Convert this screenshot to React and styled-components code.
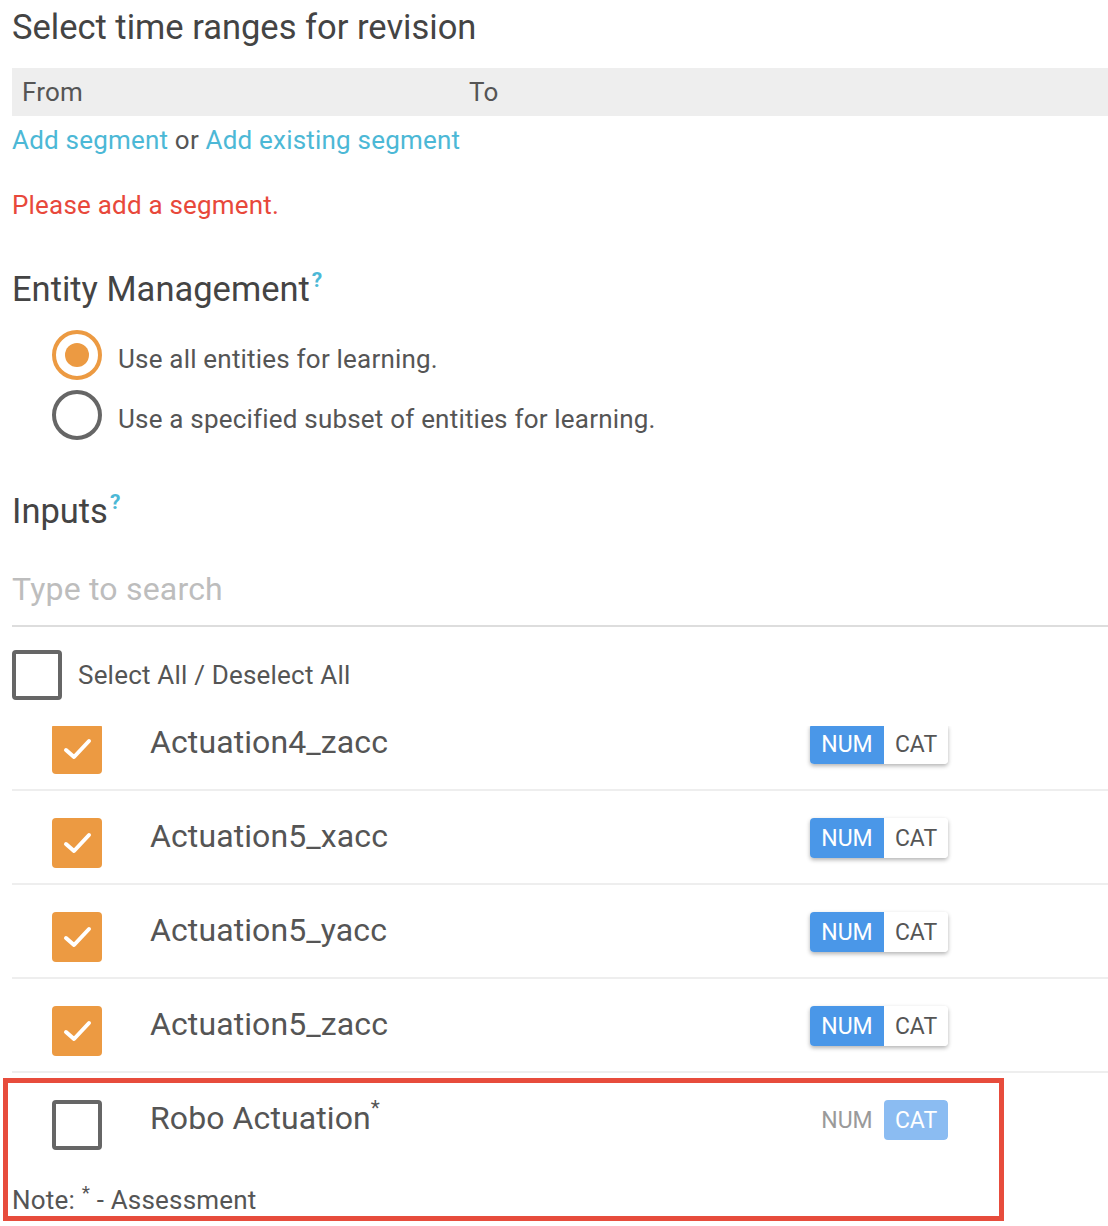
import React, { useState } from "react";
import styled, { createGlobalStyle } from "styled-components";

const Global = createGlobalStyle`
  html, body { margin: 0; padding: 0; background: #fff; }
  body { font-family: Roboto, "Noto Sans", Arial, sans-serif; color: #555; }
  *, *::before, *::after { box-sizing: border-box; }
`;

const Page = styled.div`
  padding: 8px 0 12px 12px;
  width: 1108px;
  min-height: 1226px;
`;

const Heading = styled.h2`
  margin: ${(p) => p.$mt || 0}px 0 0;
  font-size: 34.5px;
  line-height: 38px;
  font-weight: 400;
  color: #444;
`;

const Help = styled.sup`
  font-size: 21px;
  line-height: 0;
  color: #4cb8d6;
  font-weight: 700;
  margin-left: 2px;
  vertical-align: 14px;
`;

const RangeHeader = styled.div`
  margin-top: 22px;
  height: 48px;
  background: #eee;
  display: grid;
  grid-template-columns: 447px 1fr;
  align-items: center;
  padding-left: 10px;
  font-size: 26px;
  letter-spacing: 0.2px;
  color: #555;
`;

const Line = styled.div`
  margin-top: ${(p) => p.$mt || 0}px;
  font-size: 26px;
  letter-spacing: 0.2px;
  line-height: 28px;
  color: ${(p) => p.$color || "#555"};
`;

const Link = styled.a`
  color: #4cb8d6;
  text-decoration: none;
  cursor: pointer;
`;

const RadioGroup = styled.div`
  margin-top: 22px;
  padding-left: 40px;
  display: flex;
  flex-direction: column;
  gap: 10px;
`;

const RadioItem = styled.label`
  display: flex;
  align-items: center;
  gap: 16px;
  height: 50px;
  cursor: pointer;
`;

const RadioCircle = styled.span`
  width: 50px;
  height: 50px;
  border-radius: 50%;
  border: 4px solid ${(p) => (p.$on ? "#ec9a42" : "#666")};
  display: flex;
  align-items: center;
  justify-content: center;
  flex: none;
  &::after {
    content: "";
    width: 24px;
    height: 24px;
    border-radius: 50%;
    background: #ec9a42;
    display: ${(p) => (p.$on ? "block" : "none")};
  }
`;

const RadioText = styled.span`
  font-size: 26px;
  letter-spacing: 0.2px;
  line-height: 28px;
  padding-top: 8px;
  color: #555;
`;

const Search = styled.input`
  display: block;
  margin-top: 39px;
  width: 1096px;
  height: 40px;
  box-sizing: content-box;
  padding: 0 0 16px 0;
  border: none;
  border-bottom: 2px solid #ddd;
  outline: none;
  font-family: Roboto, "Noto Sans", Arial, sans-serif;
  font-size: 32px;
  letter-spacing: 0.2px;
  color: #555;
  background: transparent;
  &::placeholder { color: #bdbdbd; }
`;

const SelectAllRow = styled.label`
  margin-top: 23px;
  display: flex;
  align-items: center;
  gap: 16px;
  height: 50px;
  font-size: 26px;
  letter-spacing: 0.2px;
  color: #555;
`;

const Box = styled.span`
  width: 50px;
  height: 50px;
  flex: none;
  border-radius: 4px;
  background: ${(p) => (p.$on ? "#ec9a42" : "#fff")};
  border: ${(p) => (p.$on ? "none" : "4px solid #666")};
  display: flex;
  align-items: center;
  justify-content: center;
`;

const ListClip = styled.div`
  margin-top: 26px;
  height: 347px;
  overflow: hidden;
`;

const ListTrack = styled.div`
  margin-top: -29px;
`;

const Row = styled.div`
  display: flex;
  align-items: flex-start;
  padding: 27px 0 15px 40px;
  border-bottom: ${(p) => (p.$last ? "none" : "2px solid #eee")};
`;

const RowLabel = styled.span`
  margin-left: 48px;
  font-size: 32px;
  letter-spacing: 0.1px;
  line-height: 36px;
  color: #555;
  flex: 1;
`;

const Star = styled.sup`
  font-size: 21px;
  line-height: 0;
  vertical-align: 14px;
`;

const Toggle = styled.div`
  display: flex;
  margin-right: 160px;
  height: 40px;
  border-radius: 4px;
  overflow: hidden;
  box-shadow: ${(p) => (p.$flat ? "none" : "0 2px 4px rgba(0,0,0,0.3)")};
`;

const Seg = styled.span`
  display: flex;
  align-items: center;
  justify-content: center;
  width: ${(p) => p.$w}px;
  font-size: 23px;
  color: ${(p) => p.$fg};
  background: ${(p) => p.$bg};
  border-radius: ${(p) => (p.$round ? "4px" : "0")};
`;

const Highlight = styled.div`
  position: relative;
  &::after {
    content: "";
    position: absolute;
    top: 5px;
    left: -9px;
    width: 1001px;
    bottom: -7px;
    border: 5px solid #e74c3c;
    pointer-events: none;
  }
`;

const Note = styled.div`
  margin-top: 21px;
  font-size: 26px;
  letter-spacing: 0.2px;
  line-height: 28px;
  color: #555;
`;

const NoteStar = styled.sup`
  font-size: 19px;
  line-height: 0;
  vertical-align: 10px;
`;

const Check = () => (
  <svg width="50" height="50" viewBox="0 0 50 50">
    <polyline
      points="14,26 22,33 37,17"
      fill="none"
      stroke="#fff"
      strokeWidth="4"
      strokeLinecap="round"
      strokeLinejoin="round"
    />
  </svg>
);

const NumCat = ({ mode }) =>
  mode === "cat" ? (
    <Toggle $flat>
      <Seg $w={74} $fg="#9a9a9a" $bg="transparent">NUM</Seg>
      <Seg $w={64} $fg="#fff" $bg="#8bbcf2" $round>CAT</Seg>
    </Toggle>
  ) : (
    <Toggle>
      <Seg $w={74} $fg="#fff" $bg="#4a97e8">NUM</Seg>
      <Seg $w={64} $fg="#555" $bg="#fff">CAT</Seg>
    </Toggle>
  );

const items = ["Actuation4_zacc", "Actuation5_xacc", "Actuation5_yacc", "Actuation5_zacc"];

export default function App() {
  const [mode, setMode] = useState("all");
  return (
    <Page>
      <Global />
      <Heading>Select time ranges for revision</Heading>
      <RangeHeader>
        <span>From</span>
        <span>To</span>
      </RangeHeader>
      <Line $mt={10}>
        <Link>Add segment</Link> or <Link>Add existing segment</Link>
      </Line>
      <Line $mt={37} $color="#e8483b">Please add a segment.</Line>

      <Heading $mt={51}>
        Entity Management<Help>?</Help>
      </Heading>
      <RadioGroup>
        <RadioItem onClick={() => setMode("all")}>
          <RadioCircle $on={mode === "all"} />
          <RadioText>Use all entities for learning.</RadioText>
        </RadioItem>
        <RadioItem onClick={() => setMode("subset")}>
          <RadioCircle $on={mode === "subset"} />
          <RadioText>Use a specified subset of entities for learning.</RadioText>
        </RadioItem>
      </RadioGroup>

      <Heading $mt={52}>
        Inputs<Help>?</Help>
      </Heading>
      <Search placeholder="Type to search" />
      <SelectAllRow>
        <Box />
        <span>Select All / Deselect All</span>
      </SelectAllRow>

      <ListClip>
        <ListTrack>
          {items.map((name) => (
            <Row key={name}>
              <Box $on>
                <Check />
              </Box>
              <RowLabel>{name}</RowLabel>
              <NumCat mode="num" />
            </Row>
          ))}
        </ListTrack>
      </ListClip>

      <Highlight>
        <Row $last>
          <Box />
          <RowLabel>
            Robo Actuation<Star>*</Star>
          </RowLabel>
          <NumCat mode="cat" />
        </Row>
        <Note>
          Note: <NoteStar>*</NoteStar> - Assessment
        </Note>
      </Highlight>
    </Page>
  );
}
